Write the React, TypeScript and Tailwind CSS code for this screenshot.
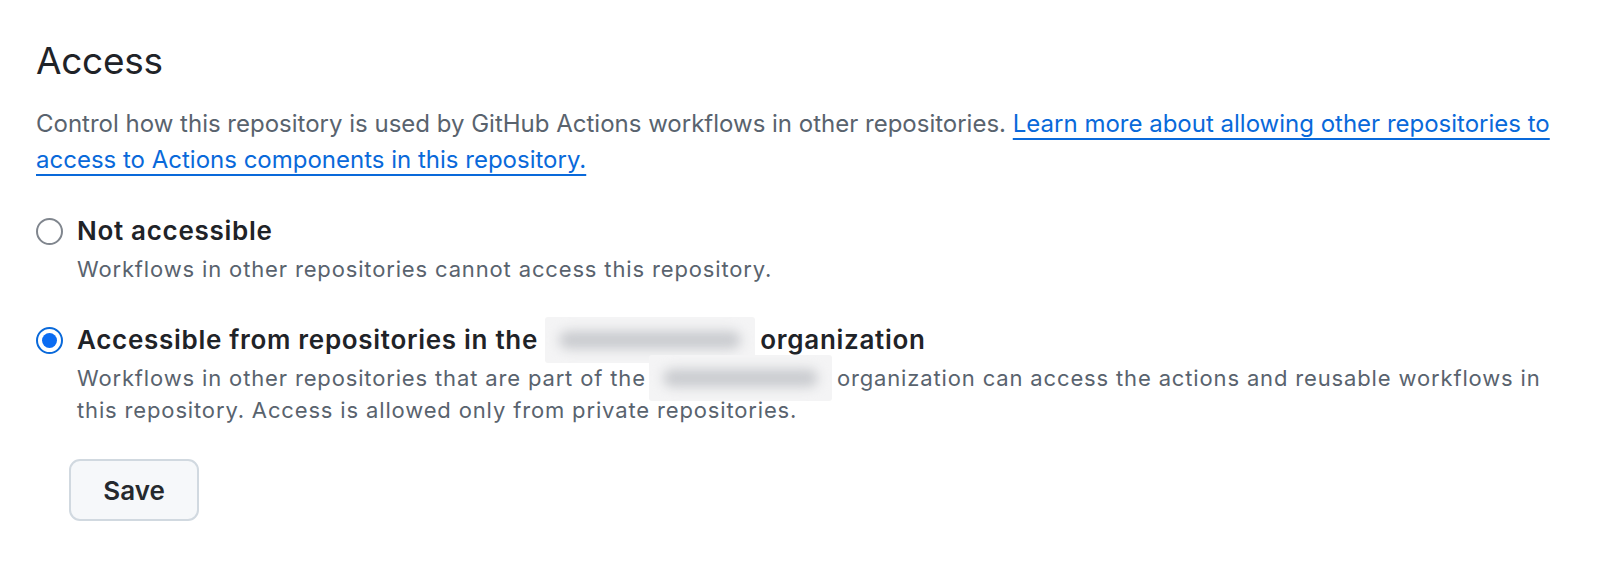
import React, { useState } from "react";

const Blur = ({ width, offset }: { width: number; offset: string }) => (
  <span
    className={`inline-block align-top h-[46px] ${offset} mr-[5px] relative overflow-hidden rounded-[3px] bg-[#f4f4f5]`}
    style={{ width }}
  >
    <span className="absolute inset-x-[14px] top-[14px] h-[18px] rounded-full bg-[#c9cbcf] blur-[6px]" />
  </span>
);

const Radio = ({ checked }: { checked: boolean }) =>
  checked ? (
    <span className="flex h-[27px] w-[27px] shrink-0 items-center justify-center rounded-full border-[2.5px] border-[#0969da] bg-white">
      <span className="h-[15px] w-[15px] rounded-full bg-[#0b6cf2]" />
    </span>
  ) : (
    <span className="h-[27px] w-[27px] shrink-0 rounded-full border-2 border-[#80868e] bg-white" />
  );

export default function App() {
  const [access, setAccess] = useState<"none" | "org">("org");

  return (
    <div className="min-h-[566px] bg-white pl-9 pr-[48px] pt-9 font-['Inter',sans-serif] text-[#1f2328]">
      <h2 className="text-[37px] font-normal leading-[50px] tracking-[-0.3px]">Access</h2>
      <p className="mt-5 text-[24px] leading-[36px] text-[#59636e]">
        Control how this repository is used by GitHub Actions workflows in other repositories.{" "}
        <a
          href="#"
          className="text-[#0969da] underline decoration-[2px] underline-offset-[6px]"
        >
          Learn more about allowing other repositories to access to Actions components in this
          repository.
        </a>
      </p>

      <div className="mt-[35px] flex flex-col gap-[37px]">
        <div className="flex cursor-pointer gap-[14px]" onClick={() => setAccess("none")}>
          <div className="flex h-[36px] items-center">
            <Radio checked={access === "none"} />
          </div>
          <div>
            <div className="text-[26px] font-semibold leading-[36px] tracking-[0.7px]">
              Not accessible
            </div>
            <div className="mt-1 text-[22px] leading-[32px] tracking-[0.85px] text-[#59636e]">
              Workflows in other repositories cannot access this repository.
            </div>
          </div>
        </div>

        <div className="flex cursor-pointer gap-[14px]" onClick={() => setAccess("org")}>
          <div className="flex h-[36px] items-center">
            <Radio checked={access === "org"} />
          </div>
          <div>
            <div className="text-[26px] font-semibold leading-[36px] tracking-[0.7px]">
              Accessible from repositories in the <Blur width={210} offset="-my-[5px]" />
              organization
            </div>
            <div className="mt-1 text-[22px] leading-[32px] tracking-[0.85px] text-[#59636e]">
              Workflows in other repositories that are part of the{" "}
              <Blur width={183} offset="-my-[7px] -ml-[4px]" />
              organization can access the actions and reusable workflows in this repository.
              Access is allowed only from private repositories.
            </div>
          </div>
        </div>
      </div>

      <div className="mt-[33px] pl-[33px]">
        <button className="h-[62px] w-[130px] rounded-[11px] border-2 border-[#d1d9e0] bg-[#f6f8fa] text-[26px] font-semibold text-[#25292e]">
          Save
        </button>
      </div>
    </div>
  );
}
